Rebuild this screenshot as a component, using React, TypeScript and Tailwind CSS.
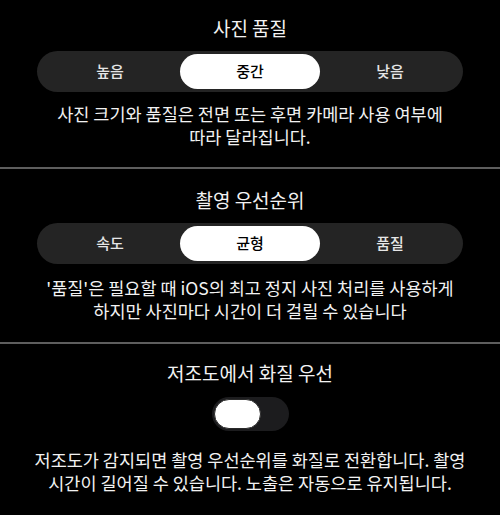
import { useState } from "react";

const font = { fontFamily: '"Noto Sans CJK KR", "Noto Sans", sans-serif' };

function Segmented({ options, value, onChange }: { options: string[]; value: number; onChange: (i: number) => void }) {
  return (
    <div className="mx-[37px] grid h-[41px] grid-cols-3 rounded-full bg-[#242424] p-[3px]">
      {options.map((o, i) => (
        <button
          key={o}
          type="button"
          onClick={() => onChange(i)}
          className={
            i === value
              ? "rounded-full bg-white text-[15px] font-medium text-black"
              : "rounded-full text-[15px] font-medium text-[#e6e6e6]"
          }
        >
          {o}
        </button>
      ))}
    </div>
  );
}

export default function App() {
  const [quality, setQuality] = useState(1);
  const [priority, setPriority] = useState(1);
  const [lowLight, setLowLight] = useState(false);

  return (
    <div className="h-[515px] w-[500px] overflow-hidden bg-black text-[#f2f2f2]" style={font}>
      <section className="pb-[19px] pt-[16px]">
        <h2 className="text-center text-[19px] leading-6">사진 품질</h2>
        <div className="mt-[11px]">
          <Segmented options={["높음", "중간", "낮음"]} value={quality} onChange={setQuality} />
        </div>
        <p className="mt-[10px] px-2 text-center text-[17.5px] leading-[23px]">
          사진 크기와 품질은 전면 또는 후면 카메라 사용 여부에
          <br />
          따라 달라집니다.
        </p>
      </section>
      <div className="h-[2px] bg-[#5e5e5e]" />
      <section className="pb-[20px] pt-[19px]">
        <h2 className="text-center text-[19px] leading-6">촬영 우선순위</h2>
        <div className="mt-[11px]">
          <Segmented options={["속도", "균형", "품질"]} value={priority} onChange={setPriority} />
        </div>
        <p className="mt-[12px] px-1 text-center text-[17.5px] leading-[23px]">
          '품질'은 필요할 때 iOS의 최고 정지 사진 처리를 사용하게
          <br />
          하지만 사진마다 시간이 더 걸릴 수 있습니다
        </p>
      </section>
      <div className="h-[2px] bg-[#5e5e5e]" />
      <section className="pt-[17px]">
        <h2 className="text-center text-[19px] leading-6">저조도에서 화질 우선</h2>
        <div className="mt-[12px] flex justify-center">
          <button
            type="button"
            onClick={() => setLowLight(!lowLight)}
            className={
              lowLight
                ? "flex h-[34px] w-[77px] items-center justify-end rounded-full bg-[#34c759] px-[2px]"
                : "flex h-[34px] w-[77px] items-center justify-start rounded-full bg-[#1c1c1e] px-[2px]"
            }
          >
            <span className="h-[30px] w-[47px] rounded-full border border-[#2a2a2a] bg-white" />
          </button>
        </div>
        <p className="mt-[17px] px-1 text-center text-[17.5px] leading-[23px]">
          저조도가 감지되면 촬영 우선순위를 화질로 전환합니다. 촬영
          <br />
          시간이 길어질 수 있습니다. 노출은 자동으로 유지됩니다.
        </p>
      </section>
    </div>
  );
}
